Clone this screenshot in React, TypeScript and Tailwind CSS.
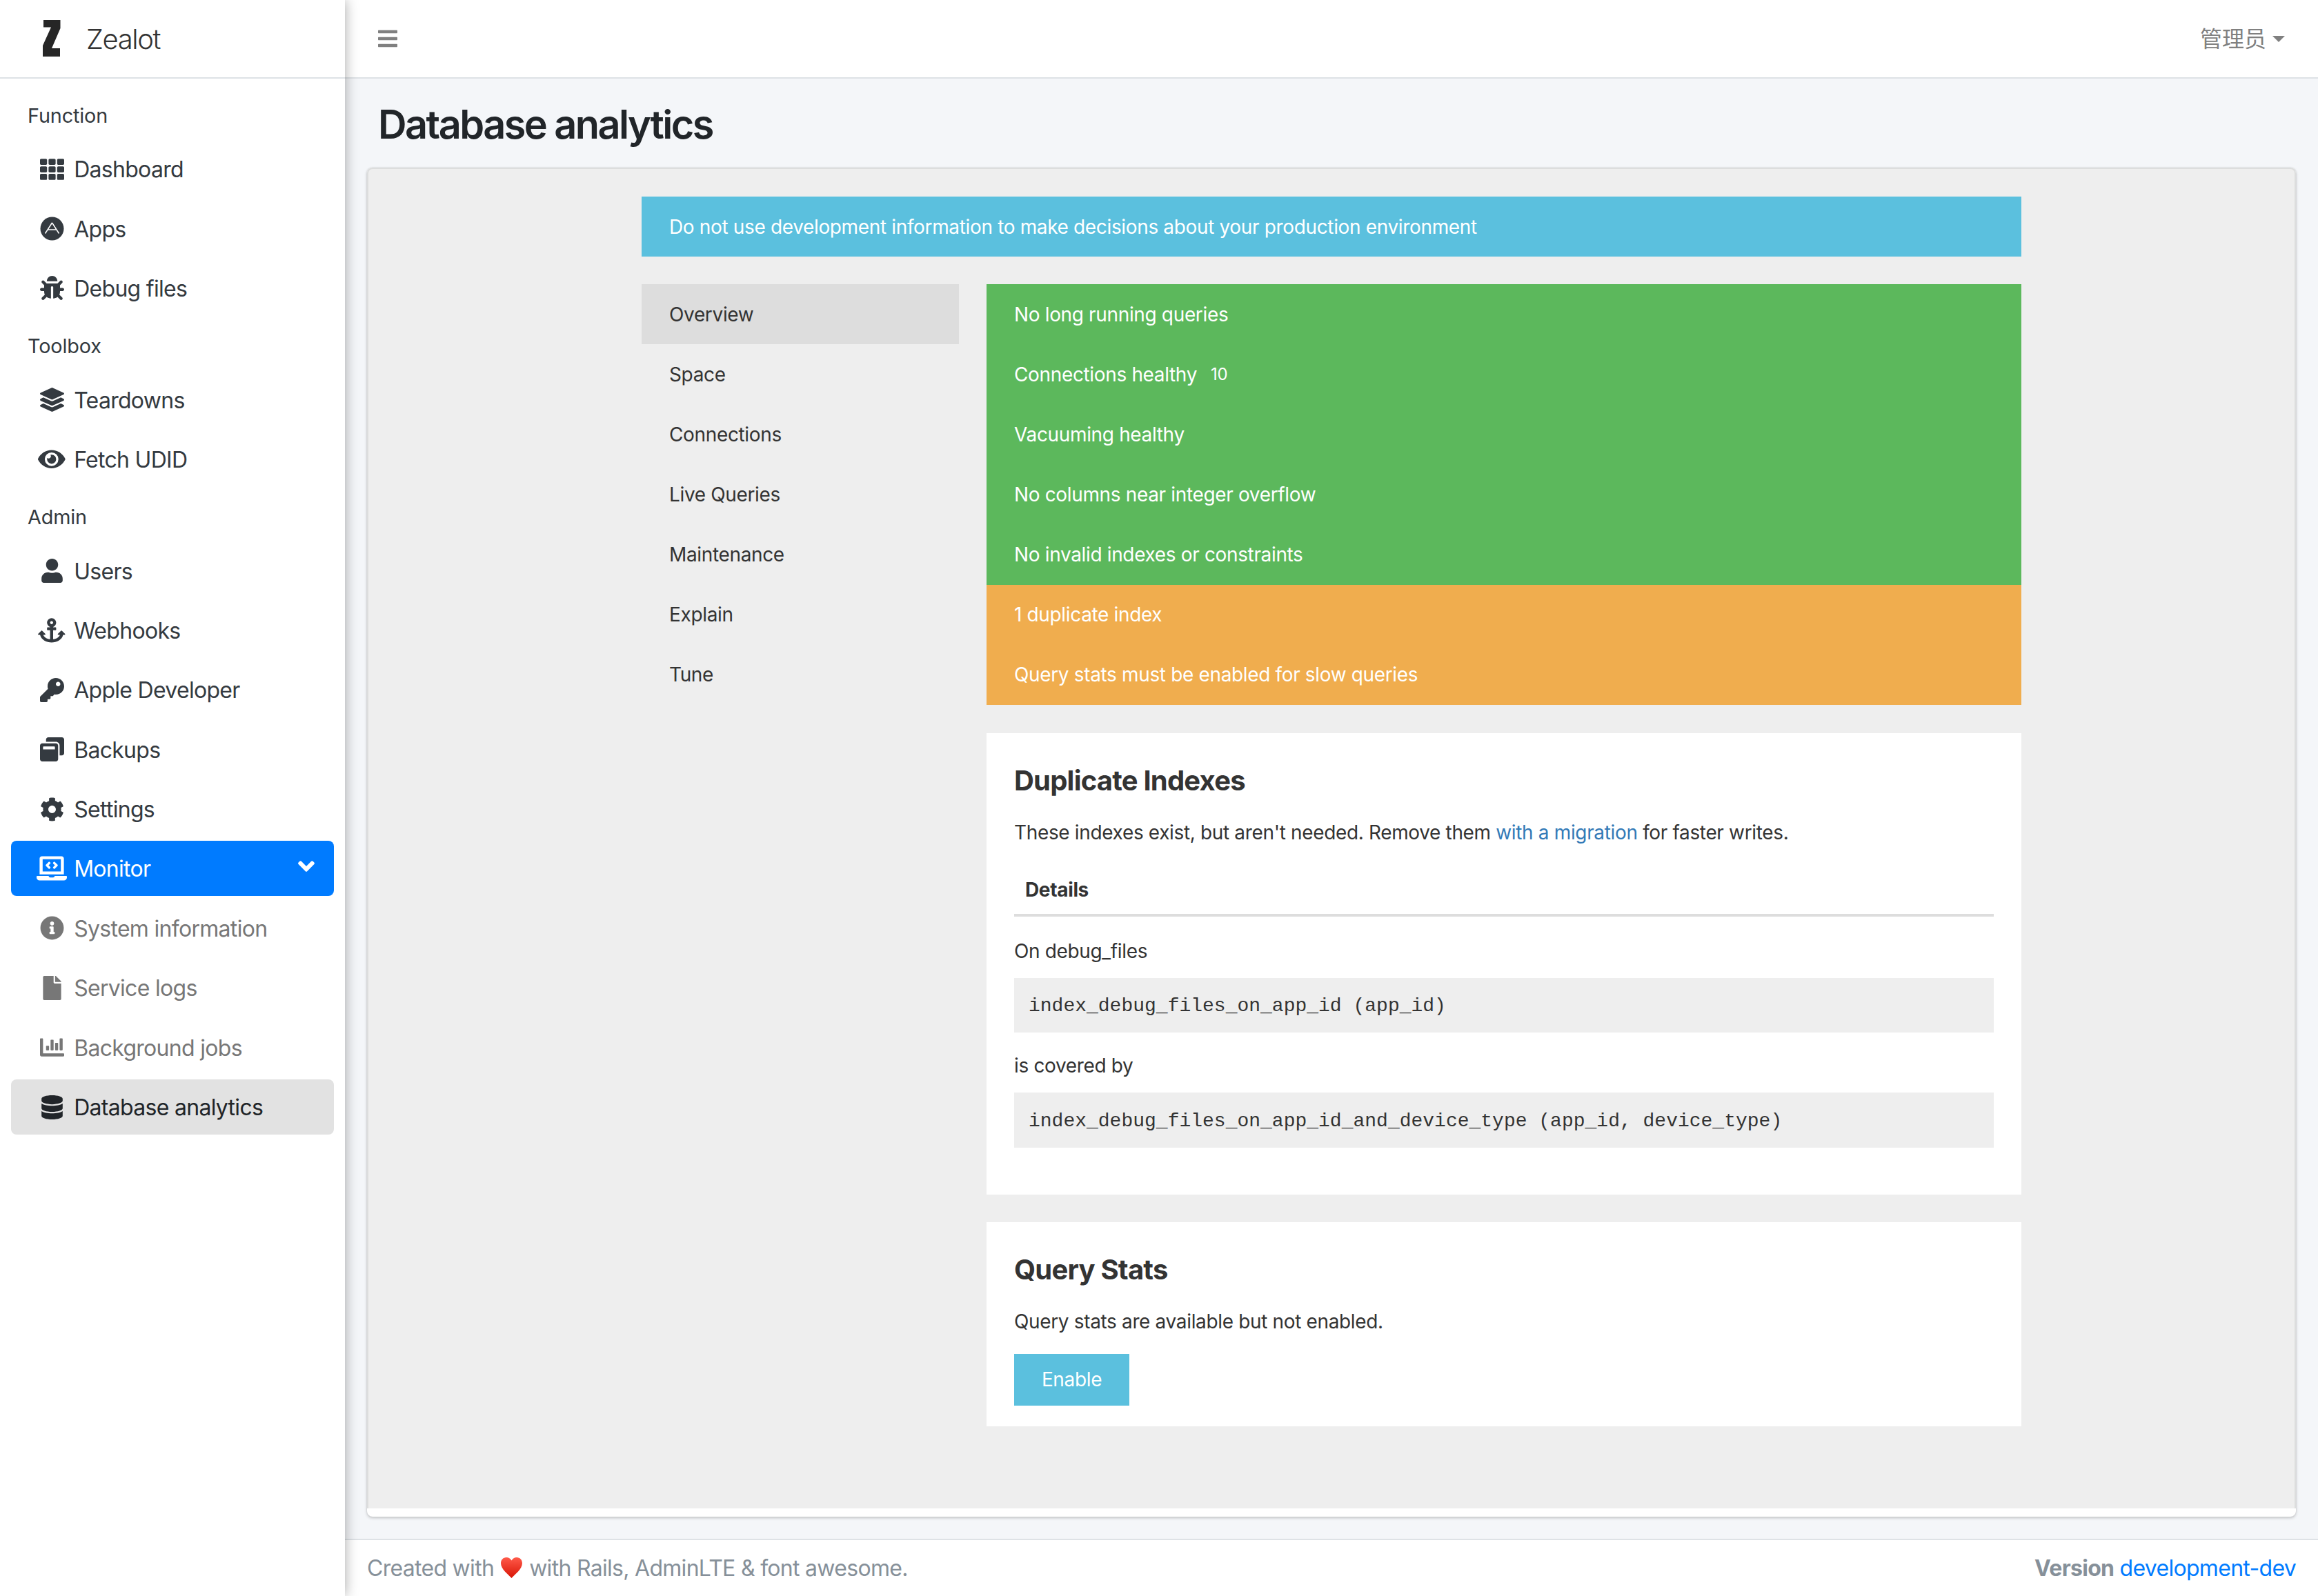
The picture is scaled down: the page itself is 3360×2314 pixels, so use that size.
import React from "react";
import {
  FaTh, FaBug, FaLayerGroup, FaEye, FaUser, FaAnchor, FaKey, FaWindowRestore, FaCog,
  FaLaptopCode, FaInfoCircle, FaFile, FaChartBar, FaDatabase, FaAngleDown, FaBars,
} from "react-icons/fa";

const font = "font-['Inter','Noto_Sans_CJK_SC',sans-serif]";

function AppStoreIcon({ size = 35 }: { size?: number }) {
  return (
    <svg width={size} height={size} viewBox="0 0 35 35">
      <circle cx="17.5" cy="17.5" r="17" fill="currentColor" />
      <path d="M17.5 9 L7.5 24.5 M17.5 9 L27.5 24.5 M11.5 19 H23.5" stroke="#fff" strokeWidth="1.5" fill="none" />
    </svg>
  );
}

function Header({ children }: { children: React.ReactNode }) {
  return <div className="h-[75.2px] pl-[40px] flex items-center text-[28.8px] tracking-[-0.005em] text-[#343a40]">{children}</div>;
}

function Item({
  icon: Icon,
  label,
  tone = "normal",
  chevron = false,
  size = 35,
}: {
  icon: React.ComponentType<{ size?: number; className?: string }>;
  label: string;
  tone?: "normal" | "active" | "muted" | "current";
  chevron?: boolean;
  size?: number;
}) {
  const tones = {
    normal: "text-[#343a40]",
    active: "bg-[#007bff] text-white",
    muted: "text-[#777777]",
    current: "bg-[#e2e2e2] text-[#212529]",
  };
  return (
    <div className={`mx-[16px] mb-[6.4px] h-[80px] rounded-[8px] flex items-center pl-[33.6px] pr-[21px] text-[32px] tracking-[-0.022em] ${tones[tone]}`}>
      <span className="w-[51.2px] mr-[6.4px] flex justify-center shrink-0">
        <Icon size={size} />
      </span>
      <span className="flex-1 pt-[2px]">{label}</span>
      {chevron && <FaAngleDown size={38} className="-mt-[6px]" />}
    </div>
  );
}

function Sidebar() {
  return (
    <aside className="relative z-10 w-[500px] shrink-0 bg-white shadow-[0_0_18px_rgba(0,0,0,0.35)]">
      <div className="h-[114px] border-b-2 border-[#dee2e6] flex items-center pl-[62px] pb-[4px]">
        <svg width="26" height="53" viewBox="0 0 26 53" className="mt-[2px]">
          <polygon fill="#262626" points="1,0 25.5,0 25.5,12 13,41 25,41 25,53 0,53 0,37 12,10.5 1,10.5" />
        </svg>
        <span className="ml-[37px] text-[40px] font-light tracking-[-0.035em] text-[#333333] leading-none mt-[6px]">Zealot</span>
      </div>
      <nav className="pt-[16px]">
        <Header>Function</Header>
        <Item icon={FaTh} label="Dashboard" />
        <Item icon={AppStoreIcon} label="Apps" />
        <Item icon={FaBug} label="Debug files" />
        <Header>Toolbox</Header>
        <Item icon={FaLayerGroup} label="Teardowns" />
        <Item icon={FaEye} label="Fetch UDID" size={39.6} />
        <Header>Admin</Header>
        <Item icon={FaUser} label="Users" />
        <Item icon={FaAnchor} label="Webhooks" size={39.6} />
        <Item icon={FaKey} label="Apple Developer" />
        <Item icon={FaWindowRestore} label="Backups" />
        <Item icon={FaCog} label="Settings" />
        <Item icon={FaLaptopCode} label="Monitor" tone="active" chevron size={44} />
        <Item icon={FaInfoCircle} label="System information" tone="muted" />
        <Item icon={FaFile} label="Service logs" tone="muted" />
        <Item icon={FaChartBar} label="Background jobs" tone="muted" />
        <Item icon={FaDatabase} label="Database analytics" tone="current" />
      </nav>
    </aside>
  );
}

const menu = ["Overview", "Space", "Connections", "Live Queries", "Maintenance", "Explain", "Tune"];

function Row({ color, children }: { color: string; children: React.ReactNode }) {
  return <div className={`h-[87.15px] flex items-center px-[40px] text-white text-[28px] ${color}`}>{children}</div>;
}

function Code({ children }: { children: React.ReactNode }) {
  return (
    <pre className="h-[79.5px] flex items-center pl-[21px] pt-[3px] bg-[#eeeeee] text-[#333333] text-[28px] tracking-normal font-['Liberation_Mono',monospace]">
      {children}
    </pre>
  );
}

function Panel() {
  return (
    <div className="w-[2000px] mx-auto pt-[39px] text-[28px] tracking-[-0.0125em] text-[#333333]">
      <div className="h-[87px] mb-[40px] flex items-center px-[40px] bg-[#5bc0de] text-white">
        Do not use development information to make decisions about your production environment
      </div>
      <div className="flex gap-[40px]">
        <div className="w-[460px] shrink-0">
          {menu.map((m, i) => (
            <div key={m} className={`h-[87.15px] flex items-center px-[40px] ${i === 0 ? "bg-[#dddddd]" : ""}`}>
              {m}
            </div>
          ))}
        </div>
        <div className="flex-1 min-w-0">
          <Row color="bg-[#5cb85c]">No long running queries</Row>
          <Row color="bg-[#5cb85c]">
            Connections healthy <span className="ml-[20px] text-[24px]">10</span>
          </Row>
          <Row color="bg-[#5cb85c]">Vacuuming healthy</Row>
          <Row color="bg-[#5cb85c]">No columns near integer overflow</Row>
          <Row color="bg-[#5cb85c]">No invalid indexes or constraints</Row>
          <Row color="bg-[#f0ad4e]">1 duplicate index</Row>
          <Row color="bg-[#f0ad4e]">Query stats must be enabled for slow queries</Row>

          <section className="mt-[41px] bg-white px-[40px] pt-[40px] pb-[68px]">
            <h2 className="text-[40px] leading-[58px] font-bold tracking-[-0.02em] mb-[25px]">Duplicate Indexes</h2>
            <p className="leading-[42px]">
              These indexes exist, but aren't needed. Remove them{" "}
              <span className="text-[#337ab7]">with a migration</span> for faster writes.
            </p>
            <div className="mt-[27px] h-[74px] border-b-4 border-[#dddddd] pl-[16px] flex items-center font-bold">
              Details
            </div>
            <p className="mt-[29px] mb-[18px] leading-[42px]">On debug_files</p>
            <Code>index_debug_files_on_app_id (app_id)</Code>
            <p className="mt-[27px] mb-[18px] leading-[42px]">is covered by</p>
            <Code>index_debug_files_on_app_id_and_device_type (app_id, device_type)</Code>
          </section>

          <section className="mt-[40px] bg-white px-[40px] pt-[40px] pb-[30px]">
            <h2 className="text-[40px] leading-[58px] font-bold tracking-[-0.02em] mb-[25px]">Query Stats</h2>
            <p className="leading-[42px] mb-[26px]">Query stats are available but not enabled.</p>
            <button className="h-[75px] w-[167px] bg-[#5bc0de] text-white text-[28px]">Enable</button>
          </section>
        </div>
      </div>
    </div>
  );
}

function Heart() {
  return (
    <svg width="33" height="30" viewBox="0 0 33 30" className="inline-block mx-[9px] align-[-3px]">
      <defs>
        <linearGradient id="heartFill" x1="0" y1="0" x2="0" y2="1">
          <stop offset="0" stopColor="#ff5a4a" />
          <stop offset="1" stopColor="#d81505" />
        </linearGradient>
      </defs>
      <path
        fill="url(#heartFill)"
        d="M16.5 30C11 24 1 17 1 8.5 1 3.5 4.5 0 9 0c3.3 0 6 1.8 7.5 4.5C18 1.8 20.7 0 24 0c4.5 0 8 3.5 8 8.5C32 17 22 24 16.5 30z"
      />
    </svg>
  );
}

export default function App() {
  return (
    <div className={`h-screen w-screen overflow-hidden flex bg-white ${font}`}>
      <Sidebar />
      <main className="flex-1 min-w-0 flex flex-col">
        <header className="h-[114px] shrink-0 bg-white border-b-2 border-[#dee2e6] flex items-center justify-between pl-[46px] pr-[48px] text-[#808080]">
          <FaBars size={32} />
          <div className="flex items-center text-[32px] font-['Noto_Sans_CJK_SC',sans-serif]">
            <span className="-mt-[4px]">管理员</span>
            <span className="ml-[9px] border-x-[9.6px] border-t-[9.6px] border-x-transparent border-t-[#808080]" />
          </div>
        </header>
        <div className="flex-1 min-h-0 bg-[#f4f6f9] flex flex-col pt-[32px] px-[32px] pb-[32px]">
          <h1 className="px-[16px] text-[57.6px] leading-[69px] font-semibold tracking-[-0.044em] text-[#212529] mb-[28px]">Database analytics</h1>
          <div className="flex-1 min-h-0 flex flex-col bg-white rounded-[8px] pb-[12px] shadow-[0_0_2px_rgba(0,0,0,0.125),0_2px_4px_rgba(0,0,0,0.2)]">
            <div className="flex-1 min-h-0 bg-[#eeeeee] rounded-t-[8px] overflow-hidden pt-[1px] border-x-2 border-t-2 border-[#dcdddd]">
              <Panel />
            </div>
          </div>
        </div>
        <footer className="h-[83px] shrink-0 bg-white border-t-2 border-[#dee2e6] flex items-center justify-between px-[32px] text-[32px] tracking-[-0.022em] text-[#869099]">
          <div>
            Created with
            <Heart />
            with Rails, AdminLTE &amp; font awesome.
          </div>
          <div>
            <b>Version</b> <span className="text-[#007bff]">development-dev</span>
          </div>
        </footer>
      </main>
    </div>
  );
}
